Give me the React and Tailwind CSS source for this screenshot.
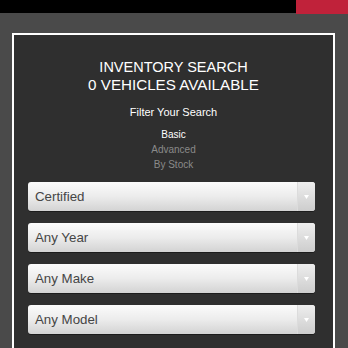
import React from "react";

const Select = ({ label }) => (
  <div className="flex h-[29px] w-[287px] items-stretch overflow-hidden rounded-[3px] bg-gradient-to-b from-[#fbfbfb] via-[#ececec] to-[#d3d3d3] shadow-[0_1px_0_rgba(0,0,0,0.4)]">
    <div className="flex flex-1 items-center pl-[7px] text-[13.3px] text-[#454545]">{label}</div>
    <div className="flex w-[18px] items-center justify-center border-l border-[#dcdcdc] bg-gradient-to-b from-[#eeeeee] to-[#cdcdcd]">
      <svg width="5" height="4" viewBox="0 0 5 4">
        <path d="M0 0 L5 0 L2.5 4 Z" fill="#ffffff" />
      </svg>
    </div>
  </div>
);

export default function App() {
  return (
    <div
      className="h-[348px] w-[348px] overflow-hidden bg-[#4a4a4a]"
      style={{ fontFamily: '"Liberation Sans", Arial, sans-serif' }}
    >
      <div className="flex h-[14px] items-start">
        <div className="h-[13px] flex-1 bg-black" />
        <div className="h-[14px] w-[52px] bg-[#c0223a]" />
      </div>
      <div className="pt-[19px]">
        <div className="ml-[12px] h-[400px] w-[323px] border-2 border-white bg-[#2f2f2f]">
          <div className="flex flex-col items-center pt-[24px] text-white">
            <div className="text-[14.5px] leading-[17px]">INVENTORY SEARCH</div>
            <div className="text-[15.2px] leading-[18px]">0 VEHICLES AVAILABLE</div>
            <div className="mt-[11px] text-[11px] leading-[14px]">Filter Your Search</div>
            <div className="mt-[8px] flex flex-col items-center text-[10px] leading-[15px]">
              <div className="text-white">Basic</div>
              <div className="text-[#8a8a8a]">Advanced</div>
              <div className="text-[#8a8a8a]">By Stock</div>
            </div>
          </div>
          <div className="ml-[14px] mt-[10px] flex flex-col gap-[12px]">
            <Select label="Certified" />
            <Select label="Any Year" />
            <Select label="Any Make" />
            <Select label="Any Model" />
          </div>
        </div>
      </div>
    </div>
  );
}
